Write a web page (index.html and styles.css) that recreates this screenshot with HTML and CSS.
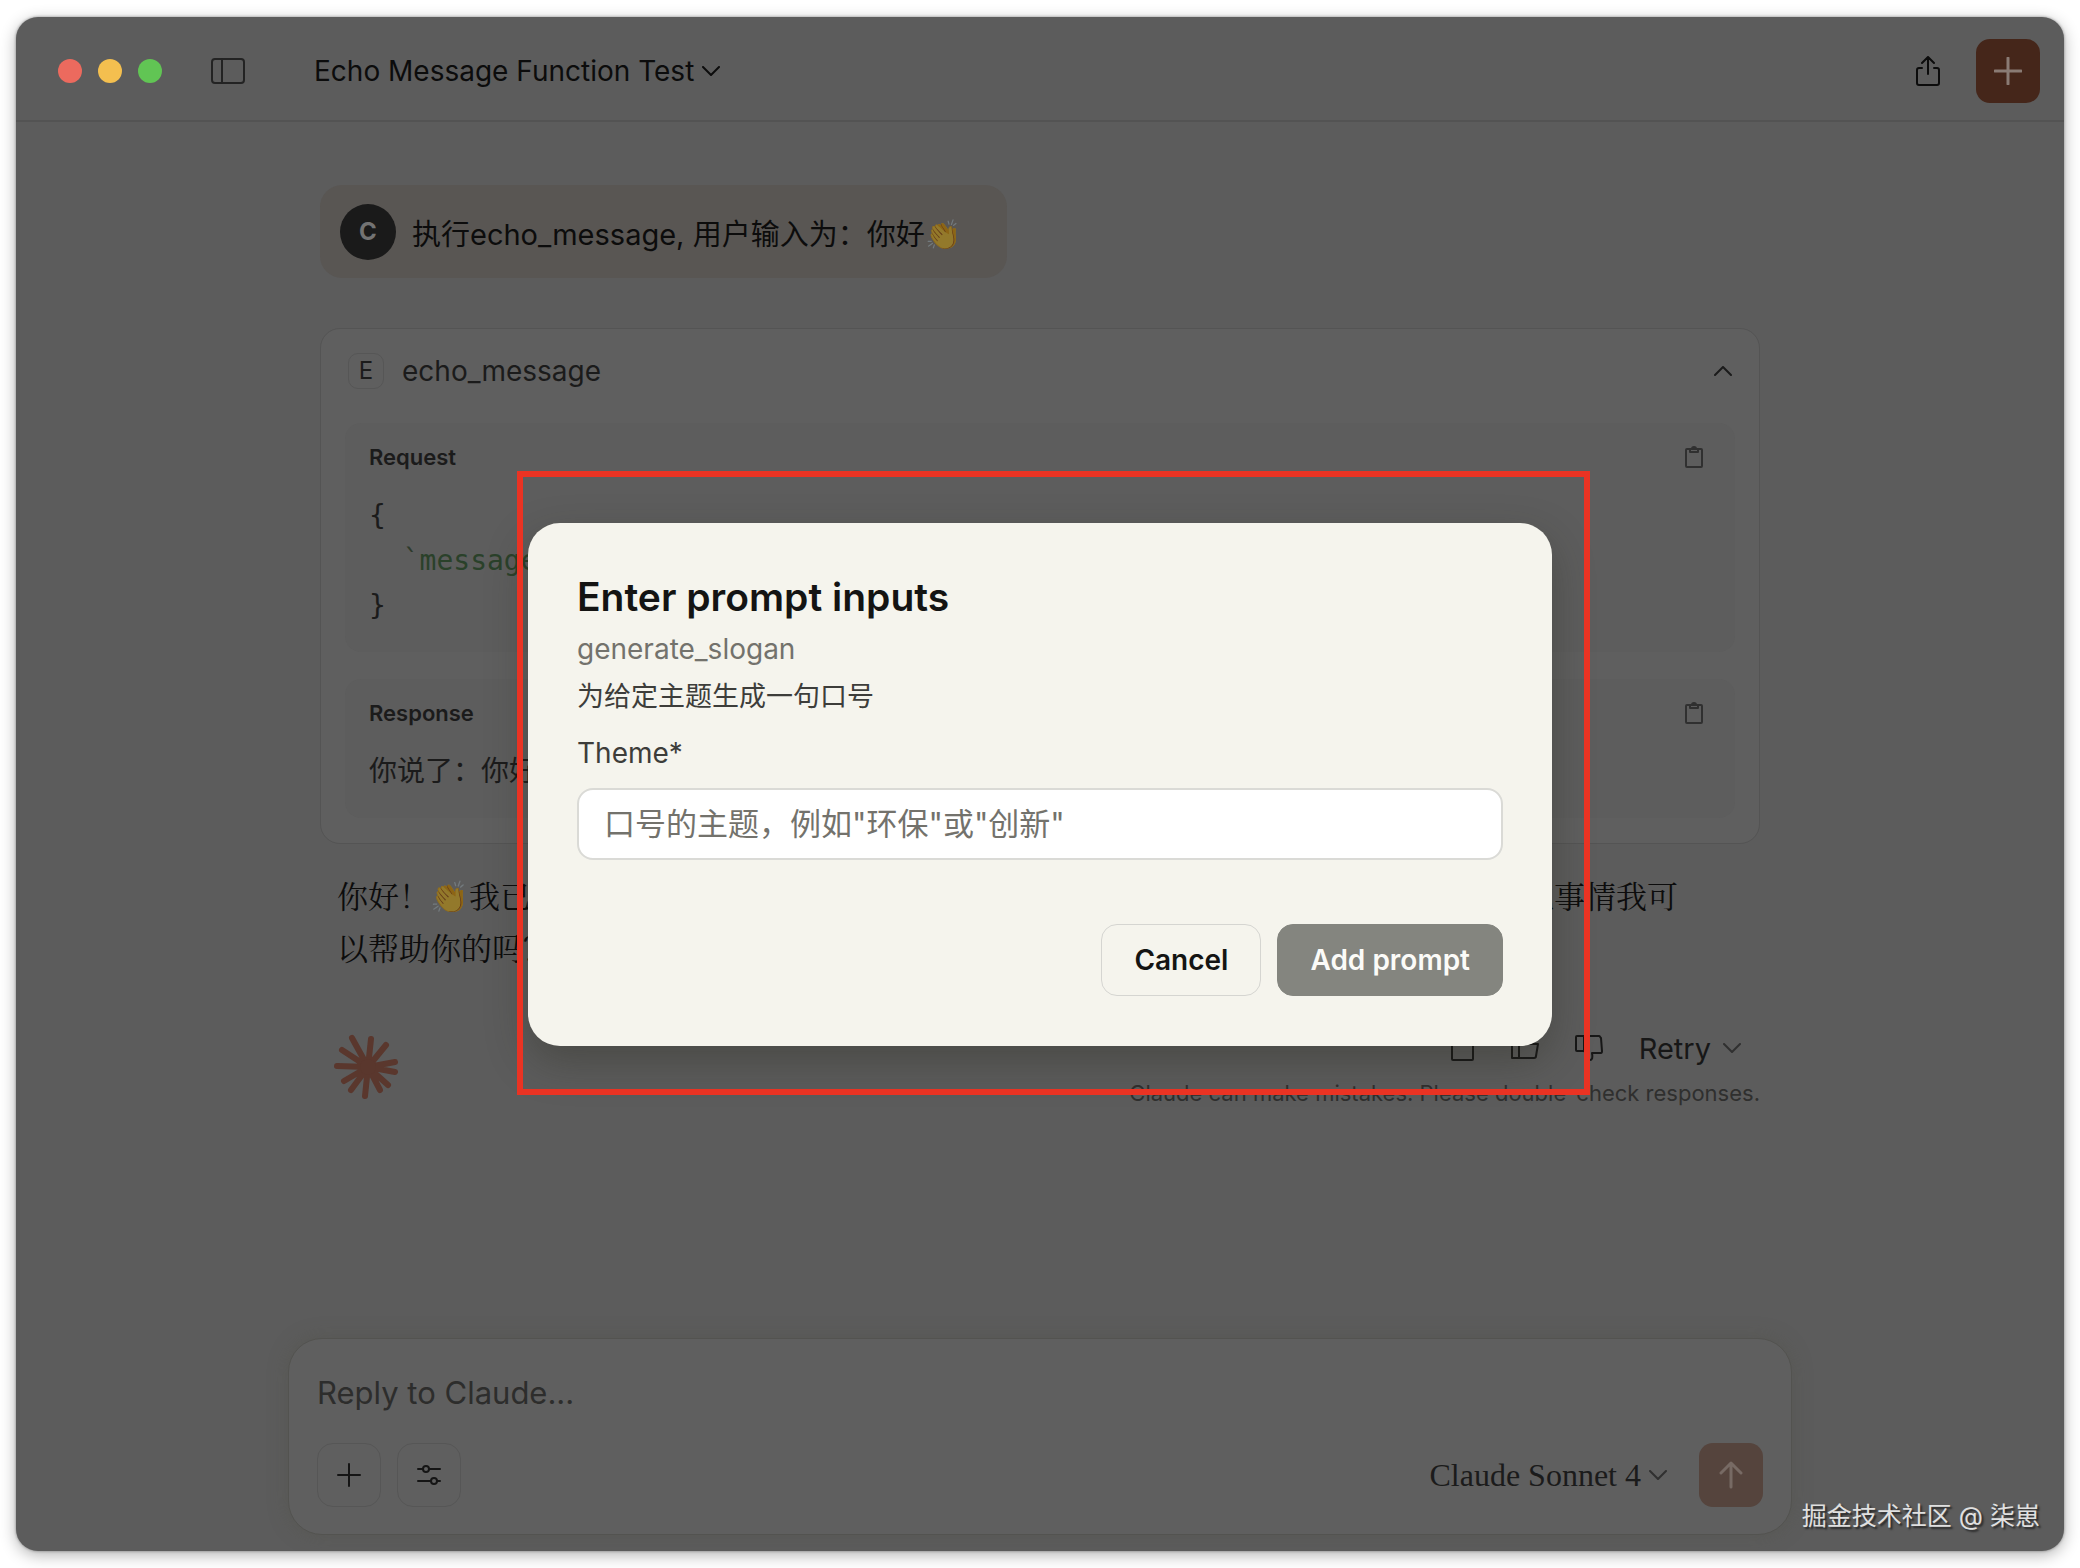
FILE: index.html
```html
<!DOCTYPE html>
<html lang="zh-CN">
<head>
  <meta charset="UTF-8" />
  <meta name="viewport" content="width=device-width, initial-scale=1.0"/>
  <title>Echo Message Function Test</title>
  <link rel="stylesheet" href="styles.css">
</head>
<body>
  <div class="window">
    <header class="titlebar">
      <div class="lights">
        <span class="light red"></span>
        <span class="light yellow"></span>
        <span class="light green"></span>
      </div>
      <button class="icon-button sidebar-toggle" aria-label="Toggle sidebar">
        <svg width="34" height="26" viewBox="0 0 34 26"><rect x="1" y="1" width="32" height="24" rx="3"/><path d="M11 1v24"/></svg>
      </button>
      <button class="chat-title">Echo Message Function Test
        <svg width="18" height="10" viewBox="0 0 18 10"><path d="M1 1l8 8 8-8"/></svg>
      </button>
      <button class="icon-button share" aria-label="Share">
        <svg width="24" height="30" viewBox="0 0 24 30"><path d="M6 12H3a2 2 0 0 0-2 2v13a2 2 0 0 0 2 2h18a2 2 0 0 0 2-2V14a2 2 0 0 0-2-2h-3M12 18V1M6 7l6-6 6 6"/></svg>
      </button>
      <button class="new-chat" aria-label="New chat">
        <svg width="28" height="28" viewBox="0 0 28 28"><path d="M14 1v26M1 14h26"/></svg>
      </button>
    </header>

    <main class="chat">
      <div class="user-message">
        <span class="avatar">C</span>
        <p>执行echo_message, 用户输入为：你好<span class="emoji">👏</span></p>
      </div>

      <section class="tool-card">
        <div class="tool-header">
          <span class="tool-badge">E</span>
          <span class="tool-name">echo_message</span>
          <button class="icon-button" aria-label="Collapse">
            <svg width="18" height="10" viewBox="0 0 18 10"><path d="M1 9l8-8 8 8"/></svg>
          </button>
        </div>
        <div class="panel">
          <div class="panel-header">
            <h3>Request</h3>
            <button class="icon-button copy" aria-label="Copy request">
              <svg width="18" height="22" viewBox="0 0 18 22"><rect x="1" y="3" width="16" height="18" rx="1"/><path d="M5 3v3h8V3h-2a2 2 0 0 0-4 0z"/></svg>
            </button>
          </div>
          <pre>{
  <span class="tick">`</span><span class="string">message`: `你好👏`</span>
}</pre>
        </div>
        <div class="panel">
          <div class="panel-header">
            <h3>Response</h3>
            <button class="icon-button copy" aria-label="Copy response">
              <svg width="18" height="22" viewBox="0 0 18 22"><rect x="1" y="3" width="16" height="18" rx="1"/><path d="M5 3v3h8V3h-2a2 2 0 0 0-4 0z"/></svg>
            </button>
          </div>
          <p class="response">你说了：你好<span class="emoji">👏</span></p>
        </div>
      </section>

      <p class="answer">你好！<span class="emoji">👏</span>我已经成功执行了消息回显功能，系统收到并返回你的问候。请问还有什么其他事情我可以帮助你的吗？</p>

      <div class="answer-footer">
        <svg class="logo" width="64" height="66" viewBox="0 0 64 66"><path d="M34 33L18 4M34 33l3-28M34 33L52 11M34 33l27-5M34 33l27 5M34 33l20 18M34 33l12 23M34 33l-3 29M34 33L17 56M34 33L10 47M34 33L3 32M34 33L8 16"/><circle cx="34" cy="33" r="8"/></svg>
        <div class="footer-right">
          <div class="actions">
            <button class="icon-button" aria-label="Copy">
              <svg width="24" height="28" viewBox="0 0 24 28"><rect x="1" y="4" width="21" height="22" rx="1"/><path d="M7 4v3h9V4h-2a2 2 0 0 0-5 0z"/></svg>
            </button>
            <button class="icon-button" aria-label="Good response">
              <svg width="28" height="28" viewBox="0 0 28 28"><path d="M1 10h7v14H1zM8 10l5-8c3 0 3 3 2 8h12l-2 12c0 1-1 2-2 2H8"/></svg>
            </button>
            <button class="icon-button" aria-label="Bad response">
              <svg width="28" height="28" viewBox="0 0 28 28"><path d="M9 17H2a1 1 0 0 1-1-1V3a1 1 0 0 1 1-1h22c1 0 1 1 2 2l1 13c0 1 0 2-1 2h-9c1 5 0 7-2 7-1 0-2-3-3-5l-3-4V2"/></svg>
            </button>
            <button class="retry">Retry
              <svg width="18" height="10" viewBox="0 0 18 10"><path d="M1 1l8 8 8-8"/></svg>
            </button>
          </div>
          <p class="disclaimer">Claude can make mistakes. Please double-check responses.</p>
        </div>
      </div>
    </main>

    <form class="composer">
      <input class="reply" type="text" aria-label="Reply to Claude" placeholder="Reply to Claude..." />
      <div class="composer-row">
        <button type="button" class="tool-button" aria-label="Add attachment">
          <svg width="24" height="24" viewBox="0 0 24 24"><path d="M12 1v22M1 12h22"/></svg>
        </button>
        <button type="button" class="tool-button" aria-label="Tools">
          <svg width="24" height="24" viewBox="0 0 24 24"><path d="M1 6h5M12 6h11M1 18h13M20 18h3"/><circle cx="9" cy="6" r="3"/><circle cx="17" cy="18" r="3"/></svg>
        </button>
        <button type="button" class="model">Claude Sonnet 4
          <svg width="18" height="10" viewBox="0 0 18 10"><path d="M1 1l8 8 8-8"/></svg>
        </button>
        <button type="button" class="send" aria-label="Send">
          <svg width="24" height="28" viewBox="0 0 24 28"><path d="M12 26V2M2 12L12 2l10 10"/></svg>
        </button>
      </div>
    </form>

    <div class="overlay">
      <div class="modal-frame">
        <form class="modal" role="dialog" aria-labelledby="modal-title">
          <h2 id="modal-title">Enter prompt inputs</h2>
          <p class="prompt-name">generate_slogan</p>
          <p class="prompt-description">为给定主题生成一句口号</p>
          <label for="theme">Theme*</label>
          <input type="text" id="theme" name="theme" placeholder='口号的主题，例如"环保"或"创新"' required />
          <div class="modal-buttons">
            <button type="button" class="cancel">Cancel</button>
            <button type="submit" class="submit">Add prompt</button>
          </div>
        </form>
      </div>
    </div>

    <div class="watermark">掘金技术社区 @ 柒崽</div>
  </div>
</body>
</html>
```
FILE: styles.css
```css
* {
  box-sizing: border-box;
}

body {
  margin: 0;
  padding: 17px 16px;
  background-color: #fff;
  color: #0c0c0c;
  font-family: Inter, "Noto Sans CJK SC", sans-serif;
  font-size: 28px;
}

h2,
h3,
p,
pre {
  margin: 0;
}

button,
input {
  font: inherit;
  color: inherit;
}

button {
  border: none;
  padding: 0;
  background: none;
  cursor: pointer;
}

svg {
  display: block;
  fill: none;
  stroke: currentColor;
  stroke-width: 2;
  stroke-linecap: round;
  stroke-linejoin: round;
}

.window {
  position: relative;
  display: flex;
  flex-direction: column;
  min-height: calc(100vh - 34px);
  background-color: #5c5c5c;
  border-radius: 22px;
  box-shadow: 0 0 3px rgba(0, 0, 0, 0.4), 0 4px 16px rgba(0, 0, 0, 0.3);
  overflow: hidden;
}

/* title bar */

.titlebar {
  display: flex;
  align-items: center;
  height: 105px;
  padding: 5px 24px 0 42px;
  border-bottom: 2px solid #535353;
}

.lights {
  display: flex;
  gap: 16px;
  margin-right: 49px;
}

.light {
  width: 24px;
  height: 24px;
  border-radius: 50%;
}

.red {
  background-color: #ec6a5e;
}

.yellow {
  background-color: #f4bf4f;
}

.green {
  background-color: #61c554;
}

.sidebar-toggle {
  color: #232323;
  margin-right: 69px;
}

.chat-title,
.retry,
.model {
  display: flex;
  align-items: center;
  gap: 8px;
}

.share {
  margin-left: auto;
  margin-right: 36px;
}

.new-chat,
.send {
  display: flex;
  align-items: center;
  justify-content: center;
  width: 64px;
  height: 64px;
  border-radius: 14px;
  background-color: #45261a;
  color: #8a7b74;
}

.new-chat svg {
  stroke-width: 3;
}

/* conversation */

.chat {
  flex: 1;
  width: 100%;
  max-width: 1440px;
  margin: 0 auto;
  padding-top: 63px;
}

.user-message {
  display: inline-flex;
  align-items: center;
  gap: 16px;
  height: 93px;
  padding: 0 46px 0 20px;
  border-radius: 22px;
  background-color: #595653;
  font-size: 29px;
}

.avatar {
  display: flex;
  align-items: center;
  justify-content: center;
  width: 56px;
  height: 56px;
  border-radius: 50%;
  background-color: #1a1a1a;
  color: #737373;
  font-size: 24px;
  font-weight: bold;
}

.emoji {
  filter: brightness(0.6) saturate(0.8);
}

.tool-card {
  display: flex;
  flex-direction: column;
  margin-top: 50px;
  padding: 24px 24px 25px;
  border: 1px solid #545454;
  border-radius: 20px;
  background-color: #5f5f5f;
  color: #1b1b1b;
}

.tool-header {
  display: flex;
  align-items: center;
  gap: 18px;
  height: 36px;
  padding: 0 3px;
  margin-bottom: 34px;
}

.tool-header .icon-button {
  margin-left: auto;
}

.tool-badge {
  width: 36px;
  height: 36px;
  border: 1px solid #565656;
  border-radius: 10px;
  font-size: 24px;
  line-height: 34px;
  text-align: center;
}

.panel {
  padding: 20px 24px 24px;
  border-radius: 16px;
  background-color: #5d5d5d;
}

.panel + .panel {
  margin-top: 27px;
}

.panel-header {
  display: flex;
  align-items: center;
  justify-content: space-between;
  height: 28px;
  padding-right: 8px;
  margin-bottom: 22px;
}

.panel-header h3 {
  font-size: 22px;
  font-weight: 600;
}

.copy {
  color: #303030;
}

.panel pre {
  font-family: "DejaVu Sans Mono", "Noto Sans CJK SC", monospace;
  font-size: 28px;
  line-height: 45px;
}

.tick {
  color: #2d3a2a;
}

.string {
  color: #2a412a;
}

.response {
  font-size: 28px;
  line-height: 45px;
}

.answer {
  padding: 0 64px 0 17px;
  margin-top: 28px;
  font-family: "Liberation Serif", "Noto Serif CJK SC", "Noto Sans CJK SC", serif;
  font-size: 31px;
  line-height: 52px;
}

.answer-footer {
  display: flex;
  justify-content: space-between;
  margin-top: 58px;
  padding-left: 14px;
}

.logo {
  color: #5a372d;
  stroke-width: 6;
}

.logo circle {
  fill: currentColor;
  stroke: none;
}

.actions {
  display: flex;
  align-items: center;
  justify-content: flex-end;
  gap: 36px;
  height: 28px;
  padding-right: 19px;
  color: #171717;
}

.retry {
  gap: 12px;
  font-size: 29px;
}

.disclaimer {
  margin-top: 17px;
  color: #2f2f2e;
  font-size: 22px;
  line-height: 28px;
}

/* reply box */

.composer {
  width: calc(100% - 64px);
  max-width: 1504px;
  margin: 0 auto 16px;
  padding: 24px 28px 27px;
  border: 1px solid #535350;
  border-radius: 34px;
  background-color: #5f5f5f;
  box-shadow: 0 0 20px rgba(80, 80, 70, 0.4);
}

.reply {
  display: block;
  width: 100%;
  height: 58px;
  padding: 0;
  border: none;
  outline: none;
  background: none;
  font-size: 31px;
}

.reply::placeholder {
  color: #2d2d2c;
  opacity: 1;
}

.composer-row {
  display: flex;
  align-items: center;
  gap: 16px;
  margin-top: 22px;
  color: #151515;
}

.tool-button {
  display: flex;
  align-items: center;
  justify-content: center;
  width: 64px;
  height: 64px;
  border: 1px solid #565656;
  border-radius: 16px;
}

.model {
  margin-left: auto;
  margin-right: 16px;
  font-family: "Liberation Serif", serif;
  font-size: 32px;
  color: #1b1b1b;
}

.model svg,
.retry svg {
  color: #303030;
}

.send {
  background-color: #55443d;
  color: #776a64;
}

.send svg {
  stroke-width: 3;
}

/* prompt dialog */

.overlay {
  position: absolute;
  inset: 0;
  display: flex;
  align-items: center;
  justify-content: center;
}

.modal-frame {
  position: relative;
  width: 100%;
  max-width: 1024px;
}

.modal-frame::after {
  content: "";
  position: absolute;
  inset: -52px -38px -49px -11px;
  border: 6px solid #ea3323;
  pointer-events: none;
}

.modal {
  display: flex;
  flex-direction: column;
  padding: 48px 49px 50px;
  border-radius: 32px;
  background-color: #f5f4ed;
  color: #3d3d3a;
  box-shadow: 0 16px 40px rgba(40, 40, 30, 0.35);
}

.modal h2 {
  color: #141413;
  font-size: 39px;
  font-weight: 600;
  line-height: 52px;
}

.prompt-name {
  color: #73726c;
  line-height: 52px;
}

.prompt-description {
  font-size: 27px;
  line-height: 44px;
}

.modal label {
  margin-top: 12px;
  line-height: 44px;
}

.modal input {
  height: 72px;
  margin-top: 13px;
  padding: 0 25px;
  border: 2px solid #dadad6;
  border-radius: 16px;
  background-color: #fff;
  font-size: 31px;
}

.modal input::placeholder {
  color: #73726c;
  opacity: 1;
}

.modal-buttons {
  display: flex;
  justify-content: flex-end;
  gap: 16px;
  margin-top: 64px;
}

.cancel,
.submit {
  height: 72px;
  padding: 0 32px;
  border: 1px solid #d5d5d1;
  border-radius: 16px;
  color: #141413;
  font-weight: 600;
}

.submit {
  border-color: #84857f;
  background-color: #84857f;
  color: #fbfbf8;
}

.watermark {
  position: absolute;
  right: 24px;
  bottom: 18px;
  color: #e0e0e0;
  font-size: 25px;
  line-height: 34px;
  text-shadow: 2px 2px 2px rgba(0, 0, 0, 0.6);
}
```
